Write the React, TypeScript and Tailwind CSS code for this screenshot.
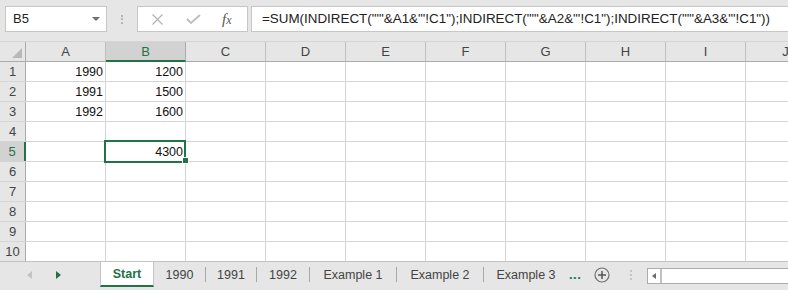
import React from "react";

const GREEN = "#217346";

const columns = ["A", "B", "C", "D", "E", "F", "G", "H", "I", "J"];

const data: Record<number, Record<string, string>> = {
  1: { A: "1990", B: "1200" },
  2: { A: "1991", B: "1500" },
  3: { A: "1992", B: "1600" },
  5: { B: "4300" },
};

const formula = `=SUM(INDIRECT("'"&A1&"'!C1");INDIRECT("'"&A2&"'!C1");INDIRECT("'"&A3&"'!C1"))`;

function FormulaBar() {
  return (
    <div className="h-[41px] flex items-start pt-[6px] pl-[5px]">
      {/* Name box */}
      <div className="w-[102px] h-[26px] bg-white border border-[#c6c6c6] flex items-center justify-between pl-[7px] pr-[6px]">
        <span className="text-[13px] text-[#222]">B5</span>
        <svg width="8" height="5" viewBox="0 0 8 5">
          <path d="M0 0 L8 0 L4 4 Z" fill="#6f6f6f" />
        </svg>
      </div>
      {/* grip dots */}
      <div className="w-[30px] h-[26px] flex flex-col items-center justify-center gap-[1.5px]">
        <span className="w-[2px] h-[2px] bg-[#b4b4b4]" />
        <span className="w-[2px] h-[2px] bg-[#b4b4b4]" />
        <span className="w-[2px] h-[2px] bg-[#b4b4b4]" />
      </div>
      {/* cancel / enter / fx */}
      <div className="w-[111px] h-[26px] bg-white border border-[#c6c6c6] flex items-center">
        <svg className="ml-[14px]" width="11" height="11" viewBox="0 0 11 11">
          <path d="M0.5 0.5 L10.5 10.5 M10.5 0.5 L0.5 10.5" stroke="#b3b3b3" strokeWidth="1.2" fill="none" />
        </svg>
        <svg className="ml-[23px]" width="15" height="10" viewBox="0 0 15 10">
          <path d="M1 5 L5 9 L14 1" stroke="#bdbdbd" strokeWidth="1.8" fill="none" />
        </svg>
        <span className="ml-[21px] italic text-[15px] text-[#555] font-['Liberation_Serif',serif] leading-none">
          f<span className="text-[12px]">x</span>
        </span>
      </div>
      {/* formula */}
      <div className="ml-[3px] flex-1 h-[26px] bg-white border border-r-0 border-[#c6c6c6] flex items-center pl-[10px] overflow-hidden whitespace-nowrap">
        <span className="text-[13.4px] text-[#222]">{formula}</span>
      </div>
    </div>
  );
}

function HeaderRow() {
  return (
    <div className="flex h-[21px] border-t border-[#d5d5d5]">
      <div className="w-[26px] shrink-0 border-r border-b border-[#ababab] relative">
        <svg className="absolute right-[3px] bottom-[3px]" width="10" height="10" viewBox="0 0 10 10">
          <path d="M10 0 L10 10 L0 10 Z" fill="#b8b8b8" />
        </svg>
      </div>
      {columns.map((c) => (
        <div
          key={c}
          className={
            c === "B"
              ? "w-[80px] shrink-0 bg-[#d2d2d2] border-r border-[#ababab] border-b-2 border-b-[#217346] flex items-center justify-center pt-[1px] text-[13px] text-[#217346]"
              : "w-[80px] shrink-0 border-r border-b border-[#bfbfbf] border-b-[#ababab] flex items-center justify-center pt-[1px] text-[13px] text-[#444]"
          }
        >
          {c}
        </div>
      ))}
    </div>
  );
}

function Row({ n }: { n: number }) {
  const selected = n === 5;
  const last = n === 10;
  return (
    <div className={last ? "flex h-[20px] border-b border-[#c2c2c2]" : "flex h-[20px] border-b border-[#d4d4d4]"}>
      <div
        className={
          selected
            ? "w-[26px] shrink-0 bg-[#d2d2d2] border-r-2 border-[#217346] flex items-center justify-center pt-[1px] text-[13px] text-[#217346]"
            : "w-[26px] shrink-0 border-r border-[#ababab] flex items-center justify-center pt-[1px] text-[13px] text-[#444]"
        }
      >
        {n}
      </div>
      {columns.map((c) => (
        <div
          key={c}
          className="w-[80px] shrink-0 bg-white border-r border-[#d4d4d4] flex items-center justify-end pr-[2px] pt-[2px] text-[12.5px] text-[#111]"
        >
          {data[n]?.[c] ?? ""}
        </div>
      ))}
    </div>
  );
}

function Sep() {
  return <span className="w-px h-[15px] bg-[#a8a8a8] shrink-0" />;
}

function Tab({ label, w }: { label: string; w: string }) {
  return <div className={`${w} shrink-0 text-center pt-[2px] text-[12.5px] text-[#444]`}>{label}</div>;
}

function SheetTabs() {
  return (
    <div className="h-[28px] flex items-start">
      <div className="w-[100px] h-[25px] flex items-center shrink-0">
        <svg className="ml-[27px]" width="5" height="8" viewBox="0 0 5 8">
          <path d="M5 0 L5 8 L0 4 Z" fill="#c3c3c3" />
        </svg>
        <svg className="ml-[24px]" width="5" height="8" viewBox="0 0 5 8">
          <path d="M0 0 L0 8 L5 4 Z" fill="#217346" />
        </svg>
      </div>
      <div className="w-[54px] h-[25px] bg-white border-l border-r border-[#c6c6c6] border-b-2 border-b-[#217346] flex items-center justify-center pt-[2px] text-[12.5px] font-bold text-[#217346] shrink-0">
        Start
      </div>
      <div className="h-[25px] flex items-center">
        <Tab label="1990" w="w-[51px]" />
        <Sep />
        <Tab label="1991" w="w-[50px]" />
        <Sep />
        <Tab label="1992" w="w-[52px]" />
        <Sep />
        <Tab label="Example 1" w="w-[86px]" />
        <Sep />
        <Tab label="Example 2" w="w-[86px]" />
        <Sep />
        <Tab label="Example 3" w="w-[84px]" />
        <span className="ml-[1px] text-[13px] font-bold text-[#217346] tracking-[0.5px] leading-none pb-[1px]">...</span>
        <svg className="ml-[13px]" width="16" height="16" viewBox="0 0 16 16">
          <circle cx="8" cy="8" r="7" stroke="#6f6f6f" strokeWidth="1.2" fill="none" />
          <path d="M8 4 L8 12 M4 8 L12 8" stroke="#555" strokeWidth="1.5" />
        </svg>
        <div className="ml-[20px] flex flex-col gap-[2px]">
          <span className="w-[2px] h-[2px] bg-[#c4c4c4]" />
          <span className="w-[2px] h-[2px] bg-[#c4c4c4]" />
          <span className="w-[2px] h-[2px] bg-[#c4c4c4]" />
        </div>
        <div className="ml-[15px] w-[150px] h-[16px] mt-[2px] bg-white border border-r-0 border-[#ababab] flex">
          <div className="w-[14px] h-full border-r-2 border-[#c2c2c2] flex items-center justify-center">
            <svg width="4" height="6" viewBox="0 0 4 6">
              <path d="M4 0 L4 6 L0 3 Z" fill="#6a6a6a" />
            </svg>
          </div>
        </div>
      </div>
    </div>
  );
}

export default function App() {
  return (
    <div
      className="w-[788px] h-[290px] overflow-hidden bg-[#e6e6e6] relative font-['Liberation_Sans',Arial,sans-serif]"
      style={{ color: GREEN }}
    >
      <FormulaBar />
      <HeaderRow />
      {[1, 2, 3, 4, 5, 6, 7, 8, 9, 10].map((n) => (
        <Row key={n} n={n} />
      ))}
      <SheetTabs />

      {/* active cell B5 */}
      <div className="absolute left-[104px] top-[140px] w-[82px] h-[23px] border-2 border-[#217346]" />
      <div className="absolute left-[182px] top-[157px] w-[7px] h-[7px] bg-[#217346] border border-white" />
    </div>
  );
}
